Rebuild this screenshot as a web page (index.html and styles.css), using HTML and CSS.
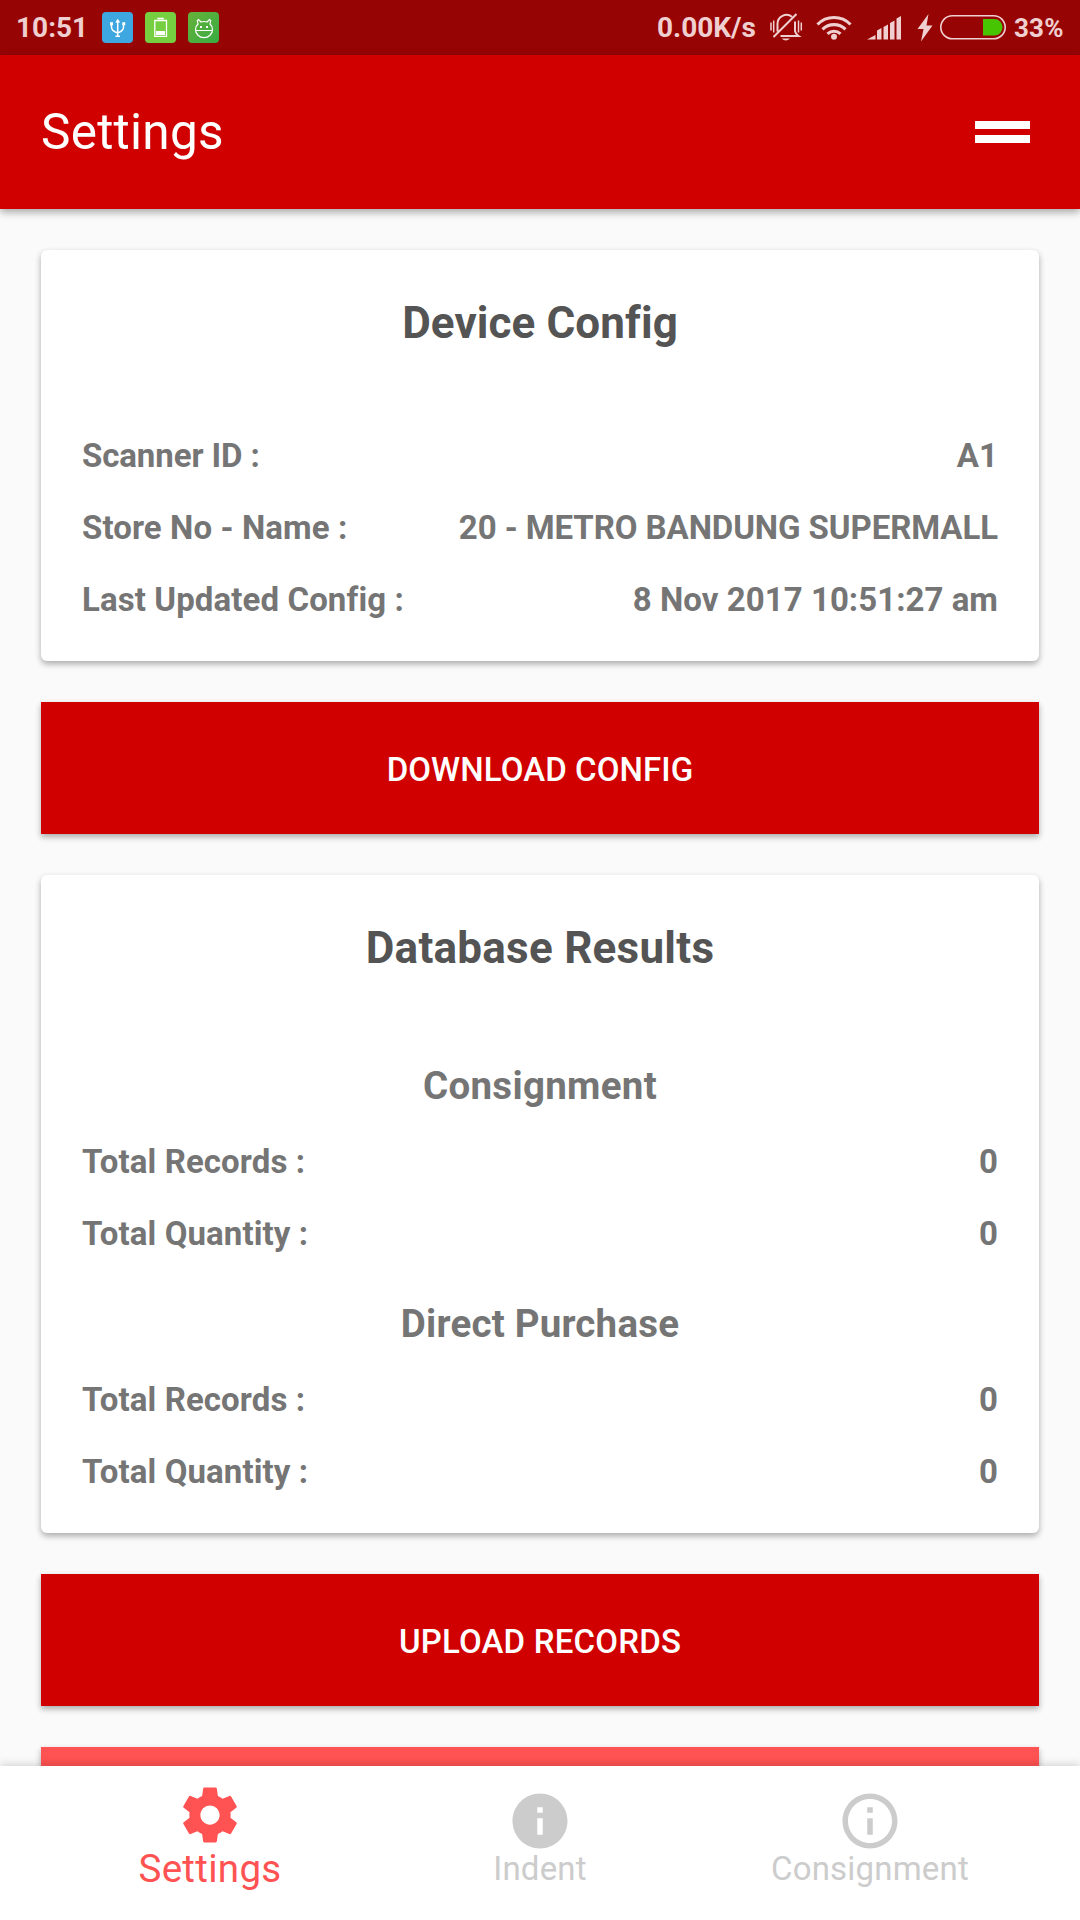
FILE: index.html
```html
<!DOCTYPE html>
<html lang="en">
<head>
<meta charset="utf-8">
<title>Settings</title>
<link rel="stylesheet" href="styles.css">
</head>
<body>
<div class="screen">
  <div class="status">
    <span class="clock">10:51</span>
    <svg class="chip" viewBox="0 0 31 31"><rect width="31" height="31" rx="4" fill="#3ea7e0"/><g fill="none" stroke="#fff" stroke-width="1.500"><path d="M15.700 8v17M9.500 11.500v3.500q0 4 6.200 6M21.500 11.500v3.500q0 4-6 6M13.500 24.300h4.500"/></g><path d="M13.200 10.500l2.500-3.800 2.500 3.800zM8 10.300h3v3H8zM20.300 10.300h3v3h-3z" fill="#fff"/></svg>
    <svg class="chip" viewBox="0 0 31 31"><rect width="31" height="31" rx="4" fill="#76cf40"/><path d="M9.800 8.500h11.700v15.800H9.800zM12.300 6.500h6.500" fill="none" stroke="#fff" stroke-width="1.300"/><path d="M11 19h9v4h-9z" fill="#fff"/></svg>
    <svg class="chip" viewBox="0 0 31 31"><defs><linearGradient id="g" x1="0" y1="0" x2="1" y2="1"><stop offset="0" stop-color="#66b13a"/><stop offset="1" stop-color="#38ac42"/></linearGradient></defs><rect width="31" height="31" rx="4" fill="url(#g)"/><path d="M7.500 17.500c0-2.500.8-4 2.500-5.500L9.300 8.500l1.200-1 2.500 2.500q3-1 6 0l2.500-2.500 1.200 1L22 12c1.700 1.500 2.500 3 2.500 5.500a8.500 8.200 0 0 1-17 0zM7.500 18.500h17" fill="none" stroke="#fff" stroke-width="1.200"/><path d="M12 14h2v2h-2zM18 14h2v2h-2z" fill="#fff"/></svg>
    <span class="speed">0.00K/s</span>
    <svg class="bell" viewBox="0 0 34 30"><g fill="none" stroke="#efcfcf" stroke-width="2"><path d="M8.500 19.500V12a9 9 0 0 1 14.500-7.200M26 9.500V19q.5 3 3.500 5H11.500M4.500 25L27.500 2"/><path d="M4.700 8.500v12M2 10.500v8M29.500 8.500v12M32.300 10.500v8" stroke-width="1.500"/></g><path d="M12.500 26.500h8.500q-4 4.200-8.500 0z" fill="#efcfcf"/></svg>
    <svg class="wifi" viewBox="0 0 36 26"><g fill="none" stroke="#efcfcf" stroke-width="3.200"><path d="M1.500 10.500a23 23 0 0 1 33 0M6.500 15.300a16.500 16.500 0 0 1 23 0M11.500 19.800a9.500 9.500 0 0 1 13 0"/></g><circle cx="18" cy="22.800" r="3" fill="#efcfcf"/></svg>
    <svg class="signal" viewBox="0 0 34 24" fill="#efcfcf"><path d="M0 23.500L8.500 19v4.500zM10 23.500v-9l4.500-2.500v11.500zM16.500 23.500V11l4.500-2.500v15zM23 23.500V7l4.500-2.500v19zM29.500 23.500V2.500L34 0v23.500z"/></svg>
    <svg class="bolt" viewBox="0 0 16 28"><path d="M11.500 0L.5 15h6L4 27.500 15.500 11.500h-6z" fill="#efcfcf"/></svg>
    <svg class="battery" viewBox="0 0 66 25"><rect x=".8" y=".8" width="64.400" height="23" rx="11.500" fill="none" stroke="#efcfcf" stroke-width="1.600"/><path d="M43 4h11.500a8 8.300 0 0 1 0 16.600H43z" fill="#48c502"/></svg>
    <span class="percent">33%</span>
  </div>
  <header class="bar">
    <h1>Settings</h1>
    <div class="menu"><i></i><i></i></div>
  </header>
  <main class="content">
    <section class="card device">
      <h2>Device Config</h2>
      <div class="row"><span class="scanner">Scanner ID :</span><span>A1</span></div>
      <div class="row"><span>Store No - Name :</span><span class="name">20 - METRO BANDUNG SUPERMALL</span></div>
      <div class="row"><span>Last Updated Config :</span><span class="date">8 Nov 2017 10:51:27 am</span></div>
    </section>
    <button class="action">DOWNLOAD CONFIG</button>
    <section class="card results">
      <h2>Database Results</h2>
      <h3>Consignment</h3>
      <div class="row"><span>Total Records :</span><span>0</span></div>
      <div class="row"><span>Total Quantity :</span><span>0</span></div>
      <h3 class="second">Direct Purchase</h3>
      <div class="row"><span>Total Records :</span><span>0</span></div>
      <div class="row"><span>Total Quantity :</span><span>0</span></div>
    </section>
    <button class="action upload">UPLOAD RECORDS</button>
    <button class="action light"></button>
  </main>
  <nav class="tabs">
    <div class="tab active">
      <svg viewBox="0 0 24 24"><path d="M19.430 12.980c.04-.32.070-.64.070-.98s-.03-.66-.07-.98l2.110-1.650c.19-.15.240-.42.120-.64l-2-3.460c-.12-.22-.39-.3-.61-.22l-2.490 1c-.52-.4-1.080-.73-1.690-.98l-.38-2.650A.488.488 0 0 0 14 2h-4c-.25 0-.46.180-.49.420l-.38 2.650c-.61.250-1.170.590-1.690.980l-2.490-1c-.23-.09-.49 0-.61.220l-2 3.460c-.13.220-.07.490.120.640l2.110 1.650c-.04.320-.07.650-.07.980s.03.660.070.980l-2.110 1.650c-.19.150-.24.420-.12.640l2 3.460c.12.220.39.300.61.220l2.490-1c.52.400 1.080.730 1.690.980l.38 2.650c.03.240.24.420.49.420h4c.25 0 .46-.18.490-.42l.38-2.650c.61-.25 1.170-.59 1.690-.98l2.490 1c.23.090.49 0 .61-.22l2-3.460c.12-.22.070-.49-.12-.64l-2.110-1.650zM12 15.500c-1.930 0-3.500-1.570-3.500-3.500s1.570-3.500 3.500-3.500 3.500 1.570 3.500 3.500-1.570 3.500-3.500 3.500z"/></svg>
      <span>Settings</span>
    </div>
    <div class="tab">
      <svg viewBox="0 0 24 24"><path d="M12 2C6.480 2 2 6.480 2 12s4.480 10 10 10 10-4.480 10-10S17.520 2 12 2zm1 15h-2v-6h2v6zm0-8h-2V7h2v2z"/></svg>
      <span>Indent</span>
    </div>
    <div class="tab">
      <svg viewBox="0 0 24 24"><path d="M11 17h2v-6h-2v6zm1-15C6.480 2 2 6.480 2 12s4.480 10 10 10 10-4.480 10-10S17.520 2 12 2zm0 18c-4.410 0-8-3.590-8-8s3.590-8 8-8 8 3.590 8 8-3.590 8-8 8zM11 9h2V7h-2v2z"/></svg>
      <span>Consignment</span>
    </div>
  </nav>
</div>
</body>
</html>
```
FILE: styles.css
```css
* { box-sizing: border-box; margin: 0; padding: 0; }
body { font-family: Roboto, sans-serif; color: #757575; background: #fafafa; }
.screen { width: 1080px; height: 1920px; display: flex; flex-direction: column; overflow: hidden; }
.status { height: 55px; flex: none; display: flex; align-items: flex-start; padding-left: 16px; background: #970404; color: #efcfcf; font-size: 28px; font-weight: 700; line-height: 56px; }
.status svg { flex: none; display: block; }
.clock { width: 86px; }
.chip { width: 31px; height: 31px; margin: 12px 12px 0 0; }
.speed { margin-left: 426px; width: 112px; }
.bell { width: 34px; height: 30px; margin: 12px 13px 0 0; }
.wifi { width: 36px; height: 26px; margin: 14px 15px 0 0; }
.signal { width: 34px; height: 24px; margin: 16px 16px 0 0; }
.bolt { width: 16px; height: 28px; margin: 14px 7px 0 0; }
.battery { width: 66px; height: 25px; margin: 15px 8px 0 0; }
.percent { font-size: 26px; letter-spacing: .2px; }
.bar { height: 154px; flex: none; display: flex; align-items: center; justify-content: space-between; padding: 0 50px 0 41px; background: #d00000; color: #fff; box-shadow: 0 3px 8px rgba(0,0,0,.35); position: relative; }
.bar h1 { font-size: 49.5px; font-weight: 400; line-height: 58px; letter-spacing: .25px; }
.menu { display: grid; gap: 6px; }
.menu i { width: 55px; height: 8px; background: #fff; }
.content { flex: 1; min-height: 0; overflow: hidden; padding: 41px 41px 0; display: flex; flex-direction: column; gap: 41px; }
.card, .action { flex: none; box-shadow: 0 3px 6px rgba(0,0,0,.32); }
.card { background: #fff; border-radius: 6px; padding: 41px 41px 0; }
.device { height: 411px; }
.results { height: 658px; }
h2 { height: 129px; line-height: 64px; font-size: 44px; text-align: center; color: #545454; letter-spacing: .1px; }
.results h2 { letter-spacing: .25px; }
h3 { height: 81px; line-height: 82px; font-size: 38.5px; text-align: center; letter-spacing: .3px; }
.second { margin-top: 13px; letter-spacing: .2px; }
.row { display: flex; justify-content: space-between; height: 72px; line-height: 72px; font-size: 33px; font-weight: 700; letter-spacing: .1px; }
.name { letter-spacing: -.08px; }
.scanner { letter-spacing: -.1px; }
.date { letter-spacing: .04px; }
.action { height: 132px; border: 0; background: #d00000; color: #fff; font: 500 33px/39px Roboto, sans-serif; letter-spacing: .1px; padding-top: 2px; }
.upload { letter-spacing: .2px; }
.light { background: #ff5252; }
.tabs { height: 154px; flex: none; display: flex; justify-content: center; background: #fff; box-shadow: 0 -2px 8px rgba(0,0,0,.15); position: relative; }
.tab { width: 330px; display: flex; flex-direction: column; align-items: center; padding-top: 22px; color: #ccc; font-size: 33px; line-height: 40px; letter-spacing: .2px; }
.tab svg { width: 66px; height: 66px; fill: currentColor; margin-bottom: -5px; }
.active { padding-top: 16px; font-size: 38.5px; color: #ff5252; letter-spacing: .3px; }
.active svg { margin-bottom: 1px; }
```
